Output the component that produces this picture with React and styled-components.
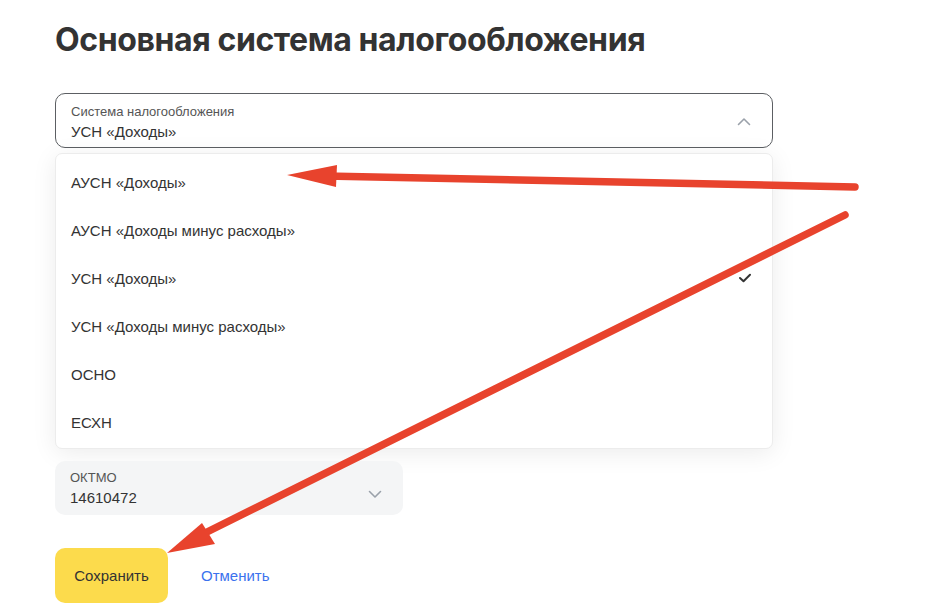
import React from 'react';
import styled, { createGlobalStyle } from 'styled-components';

const GlobalStyle = createGlobalStyle`
  html, body {
    margin: 0;
    padding: 0;
    background: #fff;
  }
  body {
    font-family: "Liberation Sans", Arial, sans-serif;
    color: #333;
  }
`;

const options = [
  'АУСН «Доходы»',
  'АУСН «Доходы минус расходы»',
  'УСН «Доходы»',
  'УСН «Доходы минус расходы»',
  'ОСНО',
  'ЕСХН',
];

const selected = 'УСН «Доходы»';

const ChevronUp = () => (
  <svg width="16" height="16" viewBox="0 0 16 16" fill="none">
    <path d="M2.5 10.5 L8 5 L13.5 10.5" stroke="#9aa1aa" strokeWidth="1.6" strokeLinecap="round" strokeLinejoin="round" />
  </svg>
);

const ChevronDown = () => (
  <svg width="16" height="16" viewBox="0 0 16 16" fill="none">
    <path d="M2.5 5.5 L8 11 L13.5 5.5" stroke="#9aa1aa" strokeWidth="1.6" strokeLinecap="round" strokeLinejoin="round" />
  </svg>
);

const Check = () => (
  <svg width="14" height="14" viewBox="0 0 14 14" fill="none">
    <path d="M2 7 L5.5 10.2 L12 3.8" stroke="#333" strokeWidth="2" strokeLinecap="round" strokeLinejoin="round" />
  </svg>
);

const App = () => {
  let content = (
    <Page>
      <GlobalStyle />
      <Title>Основная система налогообложения</Title>

      <Field $outlined>
        <FieldText>
          <FieldLabel>Система налогообложения</FieldLabel>
          <FieldValue>{selected}</FieldValue>
        </FieldText>
        <ChevronUp />
      </Field>

      <Menu>
        {options.map((opt) => (
          <MenuItem key={opt}>
            <span>{opt}</span>
            {opt === selected && <Check />}
          </MenuItem>
        ))}
      </Menu>

      <Field $small>
        <FieldText>
          <FieldLabel>ОКТМО</FieldLabel>
          <FieldValue>14610472</FieldValue>
        </FieldText>
        <ChevronDown />
      </Field>

      <Actions>
        <SaveButton>Сохранить</SaveButton>
        <CancelLink>Отменить</CancelLink>
      </Actions>

      <Arrows width="942" height="611" viewBox="0 0 942 611">
        <line x1="855" y1="187" x2="325" y2="176" stroke="#e8432d" strokeWidth="7.5" strokeLinecap="round" />
        <polygon points="287,175 337,165 336,187" fill="#e8432d" />
        <line x1="845" y1="215" x2="205" y2="533" stroke="#e8432d" strokeWidth="7.5" strokeLinecap="round" />
        <polygon points="167,553 202,523 215,544" fill="#e8432d" />
      </Arrows>
    </Page>
  );

  return content;
};

export default App;

const Page = styled.div`
  position: relative;
  width: 942px;
  height: 611px;
  overflow: hidden;
  box-sizing: border-box;
  padding: 20px 0 0 55px;
  display: flex;
  flex-direction: column;
  align-items: flex-start;
`;

const Title = styled.h1`
  margin: 0 0 33px;
  font-family: Inter, "Liberation Sans", sans-serif;
  font-size: 32px;
  line-height: 40px;
  font-weight: 700;
  color: #333;
  letter-spacing: -0.4px;
`;

const Field = styled.div`
  box-sizing: border-box;
  width: ${(p) => (p.$small ? '348px' : '718px')};
  height: ${(p) => (p.$small ? '54px' : '55px')};
  margin-top: ${(p) => (p.$small ? '12px' : '0')};
  padding: ${(p) => (p.$small ? '9px 20px 0 15px' : '10px 20px 0 15px')};
  border-radius: 10px;
  border: ${(p) => (p.$outlined ? '1px solid #5c5f63' : 'none')};
  background: ${(p) => (p.$outlined ? '#fff' : '#f4f5f6')};
  display: flex;
  align-items: flex-start;
  justify-content: space-between;

  svg {
    margin-top: ${(p) => (p.$small ? '16px' : '10px')};
  }
`;

const FieldText = styled.div`
  display: flex;
  flex-direction: column;
  gap: 2px;
`;

const FieldLabel = styled.div`
  font-size: 13px;
  line-height: 16px;
  color: #555;
`;

const FieldValue = styled.div`
  font-size: 15px;
  line-height: 20px;
  color: #333;
`;

const Menu = styled.div`
  box-sizing: border-box;
  width: 718px;
  margin-top: 5px;
  padding: 4px 0 2px;
  background: #fff;
  border-radius: 7px;
  border: 1px solid #ececec;
  box-shadow: 0 4px 24px rgba(0, 0, 0, 0.08);
`;

const MenuItem = styled.div`
  height: 48px;
  padding: 0 20px 0 15px;
  display: flex;
  align-items: center;
  justify-content: space-between;
  font-size: 15px;
  color: #333;
`;

const Actions = styled.div`
  margin-top: 33px;
  display: flex;
  align-items: center;
  gap: 33px;
`;

const SaveButton = styled.button`
  width: 113px;
  height: 55px;
  border: none;
  border-radius: 10px;
  background: #fcdb4c;
  font-family: "Liberation Sans", Arial, sans-serif;
  font-size: 15px;
  color: #333;
  padding: 0;
`;

const CancelLink = styled.a`
  font-size: 15px;
  color: #3b72ee;
  cursor: pointer;
`;

const Arrows = styled.svg`
  position: absolute;
  top: 0;
  left: 0;
  pointer-events: none;
`;
